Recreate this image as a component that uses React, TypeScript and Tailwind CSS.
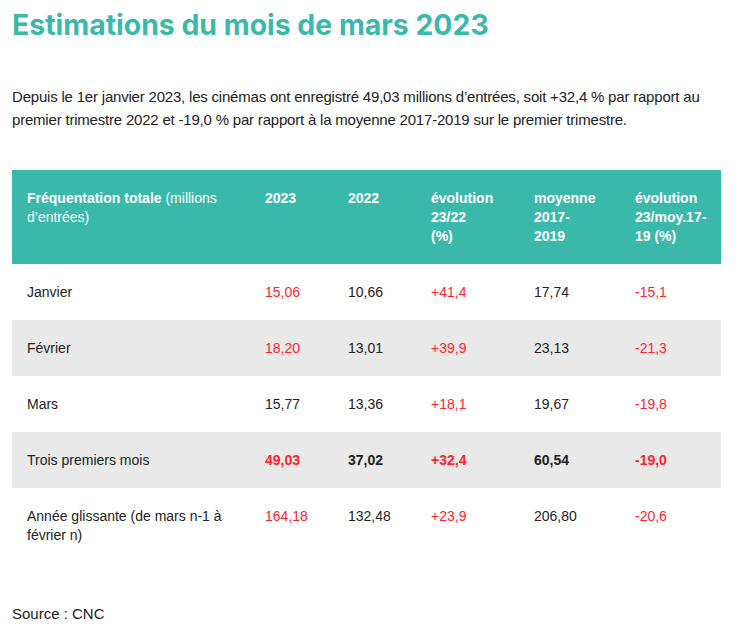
import React from "react";

type Row = {
  label: string;
  values: [string, string, string, string, string];
  bold?: boolean;
  shade?: boolean;
  red: boolean[];
};

const rows: Row[] = [
  { label: "Janvier", values: ["15,06", "10,66", "+41,4", "17,74", "-15,1"], red: [true, false, true, false, true] },
  { label: "Février", values: ["18,20", "13,01", "+39,9", "23,13", "-21,3"], shade: true, red: [true, false, true, false, true] },
  { label: "Mars", values: ["15,77", "13,36", "+18,1", "19,67", "-19,8"], red: [false, false, true, false, true] },
  { label: "Trois premiers mois", values: ["49,03", "37,02", "+32,4", "60,54", "-19,0"], bold: true, shade: true, red: [true, false, true, false, true] },
  { label: "Année glissante (de mars n-1 à février n)", values: ["164,18", "132,48", "+23,9", "206,80", "-20,6"], red: [true, false, true, false, true] },
];

export default function App() {
  return (
    <div className="min-h-screen bg-white px-3 text-[#222]" style={{ fontFamily: "'Liberation Sans', Arial, sans-serif" }}>
      <h1 className="pt-[6px] text-[28.4px] leading-[38px] font-bold text-[#3ab9ab]" style={{ fontFamily: "Inter, 'Liberation Sans', sans-serif" }}>
        Estimations du mois de mars 2023
      </h1>

      <p className="mt-[41px] text-[15px] leading-[23px] tracking-[-0.2px]" style={{ fontFamily: "'Liberation Sans Narrow', 'Liberation Sans', sans-serif" }}>
        Depuis le 1er janvier 2023, les cinémas ont enregistré 49,03 millions d’entrées, soit +32,4 % par rapport au premier trimestre 2022 et -19,0 % par rapport à la moyenne 2017-2019 sur le premier trimestre.
      </p>

      <table className="mt-[39px] w-[709px] table-fixed border-collapse text-[14px] leading-[19px]">
        <thead>
          <tr className="bg-[#3ab9ab] text-white align-top">
            <th className="w-[238px] py-[18.5px] pl-[15px] pr-3 text-left font-normal">
              <span className="font-bold">Fréquentation totale</span> (millions d’entrées)
            </th>
            <th className="w-[83px] py-[18.5px] pl-[15px] text-left font-bold">2023</th>
            <th className="w-[83px] py-[18.5px] pl-[15px] text-left font-bold">2022</th>
            <th className="w-[103px] py-[18.5px] pl-[15px] pr-[32px] text-left font-bold">évolution 23/22 (%)</th>
            <th className="w-[101px] py-[18.5px] pl-[15px] pr-[24px] text-left font-bold">moyenne 2017-2019</th>
            <th className="w-[101px] py-[18.5px] pl-[15px] pr-2 text-left font-bold">évolution 23/moy.17-19 (%)</th>
          </tr>
        </thead>
        <tbody>
          {rows.map((r) => (
            <tr key={r.label} className={`${r.shade ? "bg-[#e9e9e9]" : "bg-white"} align-top`}>
              <td className="py-[18.5px] pl-[15px] pr-3">{r.label}</td>
              {r.values.map((v, i) => (
                <td
                  key={i}
                  className={`py-[18.5px] pl-[15px] ${r.red[i] ? "text-[#ff1f2d]" : ""} ${r.bold ? "font-bold" : ""}`}
                >
                  {v}
                </td>
              ))}
            </tr>
          ))}
        </tbody>
      </table>

      <p className="mt-[41px] text-[15px] leading-[20px]">Source : CNC</p>
    </div>
  );
}
